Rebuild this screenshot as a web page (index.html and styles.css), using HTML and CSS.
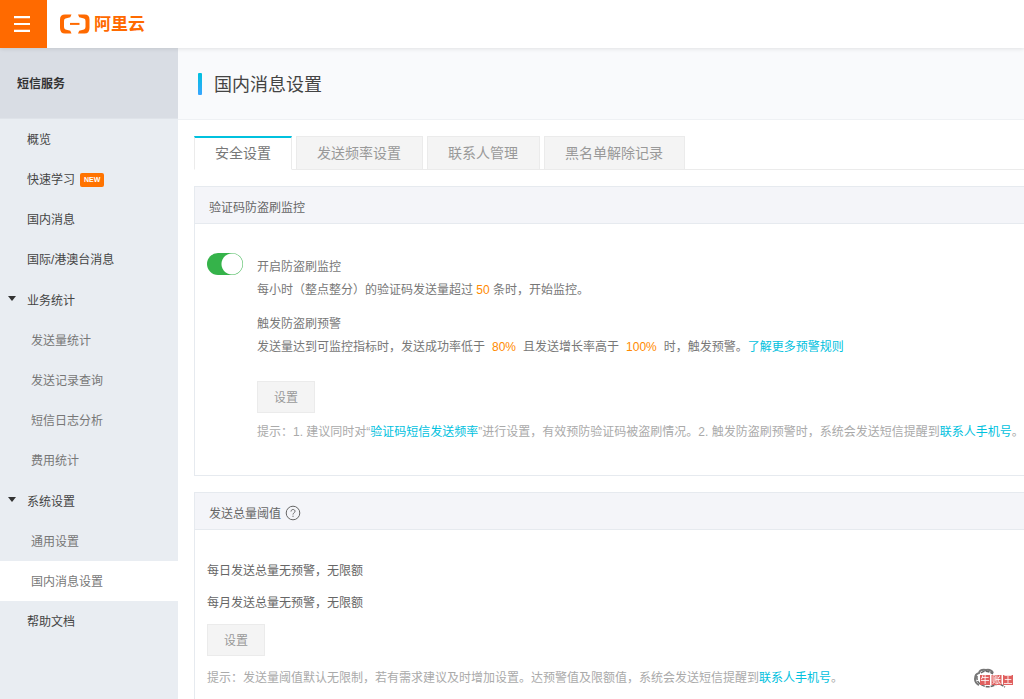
FILE: index.html
```html
<!DOCTYPE html>
<html lang="zh-CN">
<head>
<meta charset="utf-8">
<title>国内消息设置</title>
<link rel="stylesheet" href="styles.css">
</head>
<body>
<header class="topbar">
  <button class="menu" aria-label="菜单"><svg width="16" height="16" viewBox="0 0 16 16"><path d="M0 1.2h16M0 8h16M0 14.8h16" stroke="#fff" stroke-width="2.2"/></svg></button>
  <a class="brand" href="#">
    <svg width="30" height="20" viewBox="0 0 30 20"><path d="M11.500 .5H5Q0 .5 0 5.500v8.500Q0 19.500 5 19.500H11.500L10.300 16.700 5.500 15.400Q4 15 4 13v-6Q4 5 5.500 4.600L10.300 3.300zM18 .5h6.500Q29.500 .5 29.500 5.500v8.500Q29.500 19.500 24.500 19.500H18l1.200-2.800 4.800-1.300Q25.500 15 25.500 13v-6Q25.500 5 24 4.600l-4.800-1.300z" fill="#ff6a00"/><path d="M10 9.900h9.500" stroke="#ff6a00" stroke-width="2"/></svg>
    <span>阿里云</span>
  </a>
</header>
<div class="shell">
  <nav class="side">
    <h2 class="service">短信服务</h2>
    <a class="item" href="#">概览</a>
    <a class="item" href="#">快速学习<span class="new">NEW</span></a>
    <a class="item" href="#">国内消息</a>
    <a class="item" href="#">国际/港澳台消息</a>
    <button class="item group">业务统计</button>
    <a class="item sub" href="#">发送量统计</a>
    <a class="item sub" href="#">发送记录查询</a>
    <a class="item sub" href="#">短信日志分析</a>
    <a class="item sub" href="#">费用统计</a>
    <button class="item group">系统设置</button>
    <a class="item sub" href="#">通用设置</a>
    <a class="item sub current" href="#">国内消息设置</a>
    <a class="item" href="#">帮助文档</a>
  </nav>
  <main class="main">
    <div class="heading"><h1>国内消息设置</h1></div>
    <div class="tabs" role="tablist">
      <button class="tab active" role="tab" aria-selected="true">安全设置</button>
      <button class="tab" role="tab">发送频率设置</button>
      <button class="tab" role="tab">联系人管理</button>
      <button class="tab" role="tab">黑名单解除记录</button>
    </div>
    <section class="panel">
      <h3 class="panel-title">验证码防盗刷监控</h3>
      <div class="monitor">
        <input class="switch" type="checkbox" id="monitor" checked>
        <div class="detail">
          <label for="monitor">开启防盗刷监控</label>
          <p>每小时（整点整分）的验证码发送量超过 <b>50</b> 条时，开始监控。</p>
          <p class="second">触发防盗刷预警</p>
          <p>发送量达到可监控指标时，发送成功率低于<b class="rate">80%</b>且发送增长率高于<b class="rate">100%</b>时，触发预警。<a href="#">了解更多预警规则</a></p>
          <button class="set">设置</button>
          <p class="hint">提示：1. 建议同时对“<a href="#">验证码短信发送频率</a>”进行设置，有效预防验证码被盗刷情况。2. 触发防盗刷预警时，系统会发送短信提醒到<a href="#">联系人手机号</a>。</p>
        </div>
      </div>
    </section>
    <section class="panel">
      <h3 class="panel-title">发送总量阈值<svg width="16" height="16" viewBox="0 0 16 16" fill="none" stroke="#666" stroke-width="1"><circle cx="8" cy="8" r="6.800"/><path d="M6 6.500C6 3.800 10 3.900 10 6.300 10 7.800 8 7.900 8 9.500M8 10.700v1.200"/></svg></h3>
      <div class="limits">
        <p>每日发送总量无预警，无限额</p>
        <p>每月发送总量无预警，无限额</p>
        <button class="set">设置</button>
        <p class="hint">提示：发送量阈值默认无限制，若有需求建议及时增加设置。达预警值及限额值，系统会发送短信提醒到<a href="#">联系人手机号</a>。</p>
      </div>
    </section>
  </main>
</div>
<div class="stamp">
  <svg width="40" height="24" viewBox="0 0 40 24">
    <path d="M19 5Q17 1 12 2 6 1 5 5 1 6 1 11q0 4 4 6" fill="none" stroke="#777" stroke-width="2"/>
    <path d="M7 5q5-4 12 1M3 8q-1 6 5 9 6 4 15-1m3 0 5 3" fill="none" stroke="#666" stroke-width="1.500" stroke-dasharray="4 1"/>
    <path d="M6 7h10v10H6zM17.500 7h10v10h-10zM29 7h10v10H29z" fill="#e0605f"/>
    <g class="stamp-text"><text x="6.500" y="15.300">牛</text><text x="18" y="15.300">账</text><text x="29.500" y="15.300">王</text></g>
  </svg>
</div>
</body>
</html>
```
FILE: styles.css
```css
* { box-sizing: border-box; }
body {
  margin: 0;
  min-height: 100vh;
  display: flex;
  flex-direction: column;
  overflow-x: hidden;
  background: #fff;
  color: #777;
  font: 12px/20px "Liberation Sans", "Noto Sans CJK SC", sans-serif;
}
h1, h2, h3, p { margin: 0; font-weight: 400; }
a { color: #00c1de; text-decoration: none; }
button { font: inherit; cursor: pointer; }
.topbar {
  display: flex;
  height: 48px;
  background: #fff;
  box-shadow: 0 1px 4px rgba(0, 0, 0, .1);
  position: relative;
  z-index: 1;
}
.menu {
  width: 47px;
  display: grid;
  place-items: center;
  padding: 0 3px 0 0;
  border: 0;
  background: #ff6a00;
}
.brand {
  display: flex;
  align-items: center;
  gap: 4px;
  margin-left: 13px;
  color: #ff6a00;
  font-size: 17px;
  font-weight: 700;
}
.brand span { padding-top: 2px; }
.shell { display: flex; flex: 1; }
.side { flex: 0 0 178px; background: #e9edf2; }
.service {
  height: 71px;
  padding-left: 17px;
  border-bottom: 1px solid #dfe3e9;
  background: #d9dde4;
  color: #333;
  font-size: 12px;
  font-weight: 700;
  line-height: 72px;
}
.item {
  display: flex;
  align-items: center;
  width: 100%;
  height: 40px;
  padding: 2px 0 0 27px;
  border: 0;
  background: none;
  color: #444;
}
.group { height: 41px; padding-left: 8px; }
.group::before {
  content: "";
  margin: -5px 11px 0 0;
  border: 4px solid transparent;
  border-top: 5px solid #333;
  border-bottom: 0;
}
.sub { padding-left: 31px; color: #777; }
.current { background: #fff; }
.new {
  margin-left: 5px;
  padding: 0 4px;
  border-radius: 2px;
  background: #ff7300;
  color: #fff;
  font-size: 7px;
  font-weight: 700;
  line-height: 14px;
}
.main { display: flex; flex-direction: column; flex: 1; min-width: 0; }
.heading {
  display: flex;
  align-items: center;
  height: 72px;
  padding-left: 20px;
  border-bottom: 1px solid #eff1f4;
  background: #f9fafc;
}
.heading::before {
  content: "";
  width: 4px;
  height: 22px;
  margin-right: 12px;
  border-radius: 1px;
  background: linear-gradient(#00c1de, #39a5ff);
}
h1 { padding-top: 2px; color: #444; font-size: 18px; line-height: 28px; }
.tabs {
  display: flex;
  gap: 4px;
  margin: 16px 0 16px 16px;
  box-shadow: inset 0 -1px #ebebeb;
}
.tab {
  height: 34px;
  padding: 0 21px 0 20px;
  border: 1px solid #ebebeb;
  background: #f4f4f4;
  color: #999;
  font-size: 14px;
}
.active {
  padding: 0 20px 1px;
  border-top: 2px solid #00c1de;
  border-bottom-color: #fff;
  background: #fff;
  color: #777;
}
.panel {
  margin: 0 0 16px 16px;
  border: 1px solid #e6eaef;
  border-right: 0;
  white-space: nowrap;
}
.panel-title {
  display: flex;
  align-items: center;
  gap: 4px;
  height: 37px;
  padding: 6px 0 0 14px;
  border-bottom: 1px solid #e6eaef;
  background: #f4f5f9;
  color: #666;
  font-size: 12px;
}
.panel-title svg { margin-top: -3px; }
.monitor { display: flex; gap: 14px; padding: 29px 0 33px 12px; }
.switch {
  appearance: none;
  flex: none;
  width: 36px;
  height: 22px;
  margin: 0;
  border-radius: 11px;
  background: radial-gradient(circle at 25px 11px, #fff 10px, transparent 11px) #35b34a;
}
.detail { display: grid; gap: 3px; justify-items: start; padding-top: 4px; }
.second { margin-top: 11px; }
b { color: #ff8a00; font-weight: 400; }
.rate { margin: 0 7px; }
.set {
  width: 58px;
  height: 32px;
  padding: 1px 0 0;
  border: 1px solid #ebebeb;
  background: #f4f4f4;
  color: #999;
}
.detail .set { margin: 21px 0 6px; }
.hint { color: #aaa; }
.limits { display: grid; gap: 12px; justify-items: start; padding: 31px 0 0 12px; }
.limits p { color: #666; }
.limits .set { margin-top: -1px; }
.limits .hint { color: #aaa; }
.panel:last-child { flex: 1; margin-bottom: 0; border-bottom: 0; }
.stamp { position: fixed; right: 10px; bottom: 7px; width: 40px; height: 24px; }
.stamp-text { fill: #fff; font-size: 9px; }
```
